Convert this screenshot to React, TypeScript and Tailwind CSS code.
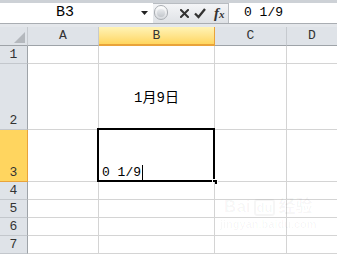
import React from "react";

const mono = { fontFamily: '"Liberation Mono", "DejaVu Sans Mono", "Noto Sans CJK SC", monospace' };

function HeaderCell({ label, w, active }: { label: string; w: string; active?: boolean }) {
  return (
    <div
      className={`${w} h-full flex items-center justify-center border-r text-[13px] text-[#333] ${
        active
          ? "bg-gradient-to-b from-[#fff3b5] to-[#ffd65e] border-[#e9a33a] border-b-2 border-b-[#e9a33a]"
          : "border-[#c6cacf] border-b border-b-[#9ea3a8]"
      }`}
      style={mono}
    >
      {label}
    </div>
  );
}

function Row({
  n,
  h,
  active,
  children,
}: {
  n: string;
  h: string;
  active?: boolean;
  children?: React.ReactNode;
}) {
  return (
    <div className={`flex ${h}`}>
      <div
        className={`w-[28px] shrink-0 flex items-end justify-center pb-[1px] text-[13px] leading-[14px] text-[#333] border-r border-b ${
          active ? "bg-[#ffd55f] border-[#e9a33a]" : "bg-[#dfe3e8] border-r-[#9ea3a8] border-b-[#c3c7cc]"
        }`}
        style={mono}
      >
        {n}
      </div>
      <div className="w-[71px] shrink-0 border-r border-b border-[#d4d4d4] bg-white" />
      <div className="w-[116px] shrink-0 border-r border-b border-[#d4d4d4] bg-white relative">{children}</div>
      <div className="w-[72px] shrink-0 border-r border-b border-[#d4d4d4] bg-white" />
      <div className="flex-1 border-b border-[#d4d4d4] bg-white" />
    </div>
  );
}

export default function App() {
  return (
    <div className="w-[337px] h-[254px] overflow-hidden relative bg-white select-none">
      {/* Formula bar */}
      <div className="h-[27px] flex flex-col bg-[#e4e7eb]">
        <div className="h-[3px] bg-[#cdd1d6]" />
        <div className="h-[20px] flex">
          <div className="w-[153px] bg-white relative flex items-center">
            <div className="w-[130px] text-center text-[15px] leading-[20px] text-black" style={mono}>
              B3
            </div>
            <svg className="absolute left-[141px] top-[8px]" width="7" height="4" viewBox="0 0 7 4">
              <path d="M0 0H7L3.5 4Z" fill="#222" />
            </svg>
          </div>
          <div className="w-[75px] relative flex items-center bg-gradient-to-b from-[#f4f5f7] to-[#dfe2e6] border-t border-[#b8bcc1]">
            <div className="absolute left-[1px] top-[1px] w-[14px] h-[15px] rounded-full border border-[#a9adb2] bg-gradient-to-b from-[#ffffff] to-[#d7dade] flex items-center justify-center">
              <div className="w-[8px] h-[8px] rounded-full bg-gradient-to-b from-[#e9ebee] to-[#c3c7cc]" />
            </div>
            <svg className="absolute left-[27px] top-[5px]" width="9" height="9" viewBox="0 0 9 9">
              <path d="M1 1L8 8M8 1L1 8" stroke="#333" strokeWidth="2" strokeLinecap="square" />
            </svg>
            <svg className="absolute left-[41px] top-[3px]" width="12" height="12" viewBox="0 0 12 12">
              <path d="M1 6.5L4.5 10L11 2" stroke="#333" strokeWidth="2.3" fill="none" />
            </svg>
            <span
              className="absolute left-[61px] top-[0px] text-[15px] leading-[18px] italic font-bold text-[#333]"
              style={{ fontFamily: '"Liberation Serif", serif' }}
            >
              f<span className="text-[11px]">x</span>
            </span>
          </div>
          <div className="flex-1 bg-white border-l border-[#b8bcc1] flex items-center pl-[15px] text-[13px] text-black" style={mono}>
            0 1/9
          </div>
        </div>
        <div className="h-px bg-[#a9adb2]" />
        <div className="flex-1 bg-[#e4e7eb]" />
      </div>

      {/* Column header */}
      <div className="flex h-[19px] bg-[#dfe3e8]">
        <div className="w-[28px] h-full border-r border-b border-r-[#c6cacf] border-b-[#9ea3a8] relative">
          <svg className="absolute left-[14px] top-[5px]" width="11" height="11" viewBox="0 0 11 11">
            <path d="M11 0V11H0Z" fill="#b4b8bd" />
          </svg>
        </div>
        <HeaderCell label="A" w="w-[71px]" />
        <HeaderCell label="B" w="w-[116px]" active />
        <HeaderCell label="C" w="w-[72px]" />
        <div className="flex-1 h-full flex items-center justify-center border-b border-[#9ea3a8] text-[13px] text-[#333]" style={mono}>
          D
        </div>
      </div>

      <Row n="1" h="h-[18px]" />
      <Row n="2" h="h-[66px]">
        <div className="absolute inset-0 flex items-center justify-center pt-[4px] text-[14px] text-black" style={mono}>
          1月9日
        </div>
      </Row>
      <Row n="3" h="h-[52px]" active>
        <div className="absolute -left-[2px] -top-[2px] -right-[1px] -bottom-[1px] border-2 border-black" />
        <div className="absolute left-[3px] bottom-[1px] flex items-end text-[13px] leading-[15px] text-black" style={mono}>
          <span>0 1/9</span>
          <span className="inline-block w-px h-[15px] bg-black ml-[1px]" />
        </div>
        <div className="absolute -right-[4px] -bottom-[4px] w-[6px] h-[6px] bg-black border border-white" />
      </Row>
      <Row n="4" h="h-[18px]" />
      <Row n="5" h="h-[18px]" />
      <Row n="6" h="h-[18px]" />
      <Row n="7" h="h-[18px]" />

      {/* Watermark */}
      <div className="absolute left-[220px] top-[198px] pointer-events-none text-[#000]/[0.035] flex flex-col items-center">
        <div className="flex items-end gap-[3px] font-bold text-[17px] leading-[18px]" style={{ fontFamily: '"Liberation Sans", "Noto Sans CJK SC", sans-serif' }}>
          <span>Bai</span>
          <span className="border-2 border-current rounded-[3px] px-[1px] text-[13px] leading-[13px]">du</span>
          <span>经验</span>
        </div>
        <div className="text-[11px] leading-[13px] font-bold mt-[2px]" style={{ fontFamily: '"Liberation Sans", sans-serif' }}>
          jingyan.baidu.com
        </div>
      </div>
    </div>
  );
}
